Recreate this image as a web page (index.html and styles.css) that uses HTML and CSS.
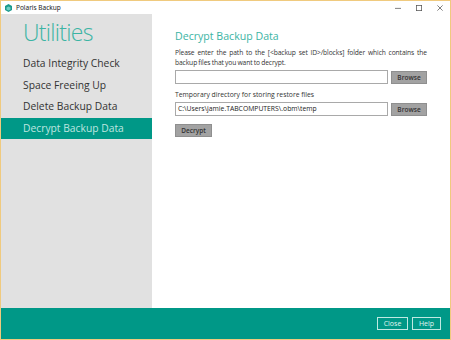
FILE: index.html
```html
<!DOCTYPE html>
<html lang="en">
<head>
  <meta charset="UTF-8" />
  <title>Polaris Backup</title>
  <link rel="stylesheet" href="styles.css">
</head>
<body>
<div class="window">
  <!-- ===== Title bar ===== -->
  <div class="titlebar">
    <svg class="app-icon" width="7" height="8" viewBox="0 0 7 8">
      <path d="M3.5 0 L7 2 V6 L3.5 8 L0 6 V2 Z" fill="#1a9a8c"/>
      <path d="M3.5 2.5 L5.5 3.6 V5.6 L3.5 6.6 L1.5 5.6 V3.6 Z" fill="#6fd0c4"/>
    </svg>
    <span class="app-title">Polaris Backup</span>
    <div class="win-ctrls">
      <span class="ctrl"><svg width="8" height="8" viewBox="0 0 8 8"><path d="M0 4.5 H8" stroke="#555"/></svg></span>
      <span class="ctrl"><svg width="8" height="8" viewBox="0 0 8 8"><rect x="0.5" y="0.5" width="7" height="7" fill="none" stroke="#555"/></svg></span>
      <span class="ctrl"><svg width="8" height="8" viewBox="0 0 8 8"><path d="M0.5 0.5 L7.5 7.5 M7.5 0.5 L0.5 7.5" stroke="#555"/></svg></span>
    </div>
  </div>

  <!-- ===== Main ===== -->
  <div class="main">
    <div class="sidebar">
      <h1>Utilities</h1>
      <ul class="menu">
        <li>Data Integrity Check</li>
        <li>Space Freeing Up</li>
        <li>Delete Backup Data</li>
        <li class="active">Decrypt Backup Data</li>
      </ul>
    </div>

    <div class="content">
      <h2>Decrypt Backup Data</h2>
      <p class="desc">Please enter the path to the [&lt;backup set ID&gt;/blocks] folder which contains the backup files that you want to decrypt.</p>
      <div class="field-row">
        <div class="field"></div>
        <button class="btn">Browse</button>
      </div>
      <p class="label">Temporary directory for storing restore files</p>
      <div class="field-row">
        <div class="field">C:\Users\jamie.TABCOMPUTERS\.obm\temp</div>
        <button class="btn">Browse</button>
      </div>
      <button class="btn decrypt">Decrypt</button>
    </div>
  </div>

  <!-- ===== Footer ===== -->
  <div class="footer">
    <button class="foot-btn">Close</button>
    <button class="foot-btn">Help</button>
  </div>
</div>
</body>
</html>
```

FILE: styles.css
```css
:root{ --teal:#009887; --teal-light:#3bb4a4; --side:#e1e1e1; }
*{ box-sizing:border-box; margin:0; padding:0; }
body{ font-family:"Open Sans",Arial,sans-serif; color:#333; background:#fff; }

.window{
  width:451px;height:340px;border:1px solid #f0ca7e;
  display:flex;flex-direction:column;overflow:hidden;
}

.titlebar{ height:13px;display:flex;align-items:center;padding-left:4px;background:#fff; }
.app-icon{ margin-right:4px; }
.app-title{ font-size:6.5px;color:#222;font-family:"Noto Sans",Arial,sans-serif; }
.win-ctrls{ margin-left:auto;display:flex; }
.ctrl{ width:21px;display:flex;justify-content:center;align-items:center; }
.ctrl svg{ width:6px;height:6px; }

.main{ flex:1;display:flex; }
.sidebar{ width:151px;background:var(--side);padding-top:4px; }
.sidebar h1{
  font-weight:300;font-size:23px;letter-spacing:-0.7px;color:var(--teal-light);
  padding-left:22px;line-height:28px;margin-bottom:7px;
}
.menu{ list-style:none; }
.menu li{ font-size:10.3px;line-height:21.5px;padding-left:22px;color:#333; }
.menu li.active{ background:var(--teal);color:#bfe6e0; }

.content{ flex:1;padding:14px 23px 0 23px; }
.content h2{ font-weight:400;font-size:10.6px;color:var(--teal-light);line-height:16px;margin-bottom:4px; }
.desc{
  font-size:6.7px;letter-spacing:-0.1px;word-spacing:-0.4px;
  line-height:9.5px;text-align:justify;margin-bottom:3px;
}
.label{ font-size:6.8px;line-height:10px;margin:6px 0 2px; }

.field-row{ display:flex;gap:3px;align-items:center; }
.field{
  flex:1;height:14px;border:1px solid #a9a9a9;background:#fff;
  font-size:6.8px;line-height:12px;padding-left:2px;color:#222;
}
.btn{
  width:36px;height:13px;background:#a2a2a2;border:1px solid #8f8f8f;
  font-family:"Open Sans",Arial,sans-serif;font-size:6.5px;font-weight:600;color:#333;
}
.decrypt{ margin-top:5px;width:37px;height:13px; }

.footer{
  height:31px;background:var(--teal);display:flex;justify-content:flex-end;
  align-items:center;gap:4px;padding-right:9px;
}
.foot-btn{
  height:13px;padding:0 5px;background:transparent;border:1px solid #bfe9e2;
  color:#e2f6f2;font-family:"Open Sans",Arial,sans-serif;font-size:7px;
}
.foot-btn:first-child{ width:31px; }
.foot-btn:last-child{ width:29px; }
```
